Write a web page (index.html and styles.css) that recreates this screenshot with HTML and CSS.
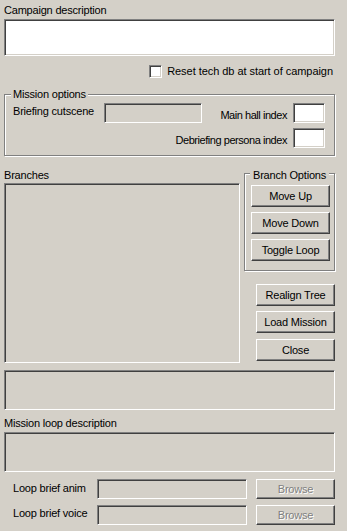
FILE: index.html
```html
<!DOCTYPE html>
<html>
<head>
<meta charset="utf-8">
<link rel="stylesheet" href="styles.css">
</head>
<body>
<div class="dlg">
  <div class="label">Campaign description</div>
  <div class="edit white desc"></div>

  <div class="check-row">
    <span class="checkbox"></span>
    <span class="label reset-lbl">Reset tech db at start of campaign</span>
  </div>

  <div class="group mission">
    <span class="legend legend-mission">Mission options</span>
    <div class="mission-left">
      <span class="label cut-lbl">Briefing cutscene</span>
      <div class="edit cutscene"></div>
    </div>
    <div class="mission-right">
      <div class="mrow">
        <span class="label mlbl">Main hall index</span>
        <div class="edit white small"></div>
      </div>
      <div class="mrow">
        <span class="label mlbl">Debriefing persona index</span>
        <div class="edit white small"></div>
      </div>
    </div>
  </div>

  <div class="branches">
    <div class="tree-col">
      <div class="label">Branches</div>
      <div class="edit tree"></div>
    </div>
    <div class="side-col">
      <div class="group bopts">
        <span class="legend legend-branch">Branch Options</span>
        <button class="btn">Move Up</button>
        <button class="btn">Move Down</button>
        <button class="btn">Toggle Loop</button>
      </div>
      <button class="btn side realign">Realign Tree</button>
      <button class="btn side load">Load Mission</button>
      <button class="btn side close">Close</button>
    </div>
  </div>

  <div class="edit box box1"></div>
  <div class="label loop-lbl">Mission loop description</div>
  <div class="edit box box2"></div>

  <div class="file-row row-anim">
    <span class="label file-lbl anim-lbl">Loop brief anim</span>
    <div class="edit file"></div>
    <button class="btn browse" disabled>Browse</button>
  </div>
  <div class="file-row row-voice">
    <span class="label file-lbl voice-lbl">Loop brief voice</span>
    <div class="edit file"></div>
    <button class="btn browse" disabled>Browse</button>
  </div>
</div>
</body>
</html>
```
FILE: styles.css
```css
html, body {
  margin: 0;
  padding: 0;
}
body {
  width: 347px;
  height: 531px;
  overflow: hidden;
  background: #d4d0c8;
  font-family: "Liberation Sans", Arial, sans-serif;
  font-size: 11px;
  letter-spacing: -0.2px;
  color: #000;
}
.dlg {
  display: flex;
  flex-direction: column;
  padding: 4px 12px 0 4px;
}
.label {
  display: block;
  line-height: 13px;
  height: 13px;
  white-space: nowrap;
}
.edit {
  box-sizing: border-box;
  border: 1px solid;
  border-color: #808080 #ffffff #ffffff #808080;
  box-shadow: inset 1px 1px 0 #404040, inset -1px -1px 0 #d4d0c8;
  background: #d4d0c8;
  flex-shrink: 0;
}
.edit.white {
  background: #ffffff;
}
.desc {
  margin-top: 2px;
  height: 37px;
  width: 331px;
}
.check-row {
  display: flex;
  justify-content: flex-end;
  align-items: flex-start;
  gap: 5px;
  margin-top: 9px;
  padding-right: 2px;
}
.reset-lbl {
  letter-spacing: -0.05px;
}
.checkbox {
  box-sizing: border-box;
  width: 13px;
  height: 13px;
  border: 1px solid;
  border-color: #808080 #ffffff #ffffff #808080;
  box-shadow: inset 1px 1px 0 #404040, inset -1px -1px 0 #d4d0c8;
  background: #fff;
}
.group {
  position: relative;
  box-sizing: border-box;
  border: 1px solid #808080;
  box-shadow: inset 1px 1px 0 #ffffff, 1px 1px 0 #ffffff;
}
.legend {
  position: absolute;
  background: #d4d0c8;
  line-height: 13px;
  white-space: nowrap;
}
.legend-mission {
  top: -7px;
  left: 6px;
  padding: 0 2px;
}
.legend-branch {
  top: -5px;
  left: 5px;
  padding: 0 3px;
}
.mission {
  margin-top: 16px;
  width: 331px;
  height: 62px;
  display: flex;
  padding: 8px 9px 0 8px;
}
.mission-left {
  display: flex;
  align-items: flex-start;
  flex-shrink: 0;
}
.cut-lbl {
  width: 91px;
  margin-top: 2px;
}
.cutscene {
  width: 98px;
  height: 20px;
}
.mission-right {
  flex: 1;
  min-width: 0;
  display: flex;
  flex-direction: column;
  gap: 5px;
}
.mrow {
  display: flex;
  justify-content: flex-end;
  align-items: flex-start;
  gap: 6px;
}
.mlbl {
  margin-top: 6px;
  letter-spacing: -0.45px;
}
.small {
  width: 32px;
  height: 20px;
}
.branches {
  display: flex;
  margin-top: 13px;
}
.tree-col {
  display: flex;
  flex-direction: column;
}
.tree {
  margin-top: 1px;
  width: 236px;
  height: 180px;
}
.side-col {
  margin-left: 4px;
  padding-top: 4px;
  display: flex;
  flex-direction: column;
  align-items: flex-end;
}
.btn {
  box-sizing: border-box;
  display: block;
  margin: 0;
  padding: 0;
  font-family: "Liberation Sans", Arial, sans-serif;
  font-size: 11px;
  letter-spacing: -0.2px;
  line-height: 13px;
  color: #000;
  background: #d4d0c8;
  border: 1px solid;
  border-color: #ffffff #404040 #404040 #ffffff;
  box-shadow: inset -1px -1px 0 #808080;
  text-align: center;
  white-space: nowrap;
}
.bopts {
  width: 91px;
  height: 98px;
  padding: 11px 0 0 6px;
  display: flex;
  flex-direction: column;
  gap: 5px;
}
.bopts .btn {
  width: 79px;
  height: 22px;
}
.side {
  width: 79px;
  height: 22px;
}
.realign {
  margin-top: 13px;
}
.load {
  margin-top: 5px;
}
.close {
  margin-top: 6px;
}
.box {
  width: 331px;
  height: 40px;
}
.box1 {
  margin-top: 7px;
}
.loop-lbl {
  margin-top: 7px;
}
.box2 {
  margin-top: 2px;
}
.file-row {
  display: flex;
  align-items: flex-start;
  padding-left: 9px;
}
.row-anim {
  margin-top: 7px;
}
.row-voice {
  margin-top: 6px;
}
.file-lbl {
  width: 84px;
}
.anim-lbl {
  margin-top: 3px;
}
.voice-lbl {
  margin-top: 2px;
}
.file {
  width: 150px;
  height: 20px;
}
.browse {
  margin-left: 9px;
  width: 79px;
  height: 20px;
  color: #808080;
  text-shadow: 1px 1px 0 #ffffff;
}
```
